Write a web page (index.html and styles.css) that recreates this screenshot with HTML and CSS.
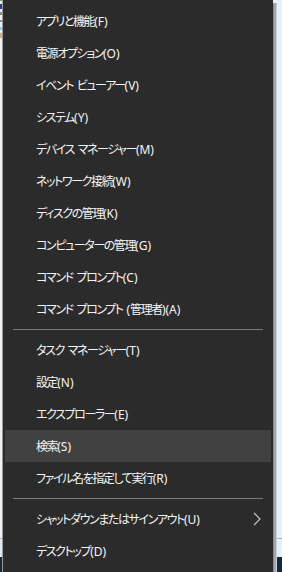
FILE: index.html
```html
<!DOCTYPE html>
<html lang="ja">
<head>
    <meta charset="UTF-8">
    <meta name="viewport" content="width=device-width, initial-scale=1.0">
    <title>クイック リンク メニュー</title>
    <link rel="stylesheet" href="styles.css">
</head>
<body>
    <div class="desktop">
        <div class="edge-left"></div>

        <div class="menu">
            <ul class="group">
                <li class="item"><span class="label">アプリと機能<span class="key">(F)</span></span></li>
                <li class="item"><span class="label">電源オプション<span class="key">(O)</span></span></li>
                <li class="item"><span class="label">イベント ビューアー<span class="key">(V)</span></span></li>
                <li class="item"><span class="label">システム<span class="key">(Y)</span></span></li>
                <li class="item"><span class="label">デバイス マネージャー<span class="key">(M)</span></span></li>
                <li class="item"><span class="label">ネットワーク接続<span class="key">(W)</span></span></li>
                <li class="item"><span class="label">ディスクの管理<span class="key">(K)</span></span></li>
                <li class="item"><span class="label">コンピューターの管理<span class="key">(G)</span></span></li>
                <li class="item"><span class="label">コマンド プロンプト<span class="key">(C)</span></span></li>
                <li class="item"><span class="label">コマンド プロンプト <span class="key">(</span>管理者<span class="key">)(A)</span></span></li>
            </ul>

            <div class="separator"></div>

            <ul class="group">
                <li class="item"><span class="label">タスク マネージャー<span class="key">(T)</span></span></li>
                <li class="item"><span class="label">設定<span class="key">(N)</span></span></li>
                <li class="item"><span class="label">エクスプローラー<span class="key">(E)</span></span></li>
                <li class="item active"><span class="label">検索<span class="key">(S)</span></span></li>
                <li class="item"><span class="label">ファイル名を指定して実行<span class="key">(R)</span></span></li>
            </ul>

            <div class="separator"></div>

            <ul class="group">
                <li class="item">
                    <span class="label">シャットダウンまたはサインアウト<span class="key">(U)</span></span>
                    <svg class="chevron" width="8" height="14" viewBox="0 0 8 14">
                        <path d="M1 1 L7 7 L1 13" fill="none" stroke="#cfcfcf" stroke-width="1.1"/>
                    </svg>
                </li>
                <li class="item"><span class="label">デスクトップ<span class="key">(D)</span></span></li>
            </ul>
        </div>

        <div class="edge-right"></div>
    </div>
</body>
</html>
```

FILE: styles.css
```css
html, body {
    margin: 0;
    padding: 0;
    height: 100%;
}

body {
    font-family: "Noto Sans", "Noto Sans CJK JP", sans-serif;
    background-color: #e6f0f9;
}

.desktop {
    display: flex;
    height: 572px;
    overflow: hidden;
}

/* window behind the menu, left side */
.edge-left {
    width: 3px;
    flex-shrink: 0;
    background:
        linear-gradient(to right, transparent 0 2px, #9b9b9b 2px 3px),
        linear-gradient(to bottom,
            #6fae4a 0 1px, #eef0f2 1px 4px,
            #1f3f8c 4px 9px, #eef0f2 9px 12px,
            #8a8a8a 12px 15px, #eef0f2 15px 20px,
            #8a8a8a 20px 22px, #eef0f2 22px 27px,
            #7fd3dd 27px 30px, #eef0f2 30px 33px,
            #c9b27a 33px 38px, #eef0f2 38px 538px,
            #a7b3bd 538px 539px, #dfeaf4 539px 557px,
            #13283f 557px);
}

.menu {
    width: 270px;
    flex-shrink: 0;
    background-color: #2b2b2b;
    padding-top: 5px;
    box-sizing: border-box;
}

.group {
    list-style: none;
    margin: 0;
    padding: 0;
}

.item {
    display: flex;
    align-items: center;
    height: 32px;
    margin: 0 2px;
    padding: 0 10px 0 31px;
    font-size: 12px;
    color: #f5f5f5;
}

.item .label {
    font-feature-settings: "palt";
    letter-spacing: -1.4px;
    word-spacing: 2px;
    white-space: nowrap;
}

.item .key {
    letter-spacing: 0;
}

.item.active {
    background-color: #414141;
}

.chevron {
    margin-left: auto;
}

.separator {
    height: 1px;
    margin: 4px 10px;
    background-color: #7b7b7b;
}

/* drop shadow and the window behind, right side */
.edge-right {
    flex: 1;
    background:
        linear-gradient(to right, #8c8c8c 0 1px, #a6a6a6 1px 3px, #c9d1d6 3px 4px, transparent 4px) 0 3px / 100% calc(100% - 3px) no-repeat,
        linear-gradient(to bottom, #e6f0f9 0 538px, #a7b3bd 538px 539px, #e6f0f9 539px 557px, #13283f 557px);
}
```
